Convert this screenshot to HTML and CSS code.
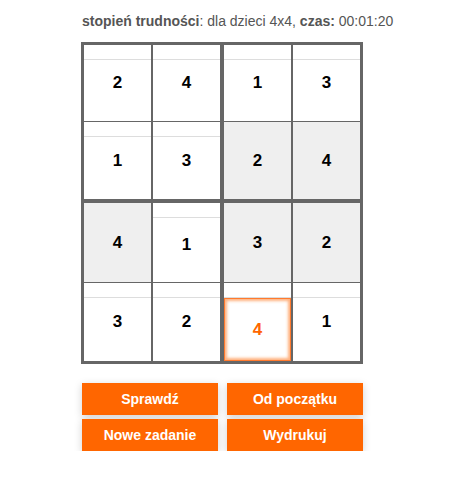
FILE: index.html
```html
<!DOCTYPE html>
<html lang="pl">
<head>
<meta charset="utf-8">
<link rel="stylesheet" href="styles.css">
</head>
<body>
<div class="page">
  <p class="info"><b>stopień trudności</b>: dla dzieci 4x4, <b>czas:</b> 00:01:20</p>
  <div class="board">
    <div class="box top">
      <div class="cell"><span>2</span></div>
      <div class="cell"><span>4</span></div>
      <div class="cell"><span>1</span></div>
      <div class="cell"><span>3</span></div>
    </div>
    <div class="box top">
      <div class="cell"><span>1</span></div>
      <div class="cell"><span>3</span></div>
      <div class="cell given"><span>2</span></div>
      <div class="cell given"><span>4</span></div>
    </div>
    <div class="box bottom">
      <div class="cell given"><span>4</span></div>
      <div class="cell low"><span>1</span></div>
      <div class="cell"><span>3</span></div>
      <div class="cell"><span>2</span></div>
    </div>
    <div class="box bottom">
      <div class="cell given"><span>3</span></div>
      <div class="cell given"><span>2</span></div>
      <div class="cell sel"><div class="focus">4</div></div>
      <div class="cell"><span>1</span></div>
    </div>
  </div>
  <div class="buttons">
    <button class="btn">Sprawdź</button>
    <button class="btn">Od początku</button>
    <button class="btn">Nowe zadanie</button>
    <button class="btn">Wydrukuj</button>
  </div>
</div>
</body>
</html>
```
FILE: styles.css
```css
html, body {
  margin: 0;
  padding: 0;
  background: #fff;
}
body {
  font-family: "Liberation Sans", Arial, sans-serif;
}
.page {
  padding: 13px 0 0 81px;
  width: 282px;
}
.info {
  margin: 0 0 13px 1px;
  font-size: 14px;
  line-height: 16px;
  color: #555;
  white-space: nowrap;
}
.info b {
  font-weight: bold;
}
.board {
  display: grid;
  grid-template-columns: 136px 136px;
  gap: 4px;
  border: 3px solid #666;
  background: #666;
  width: 276px;
}
.box {
  display: grid;
  grid-template-columns: 67px 67px;
  column-gap: 2px;
  row-gap: 1px;
  background: #666;
}
.box.top {
  grid-template-rows: 76px 77px;
}
.box.bottom {
  grid-template-rows: 79px 78px;
}
.cell {
  position: relative;
  background: #fff;
  display: flex;
  align-items: center;
  justify-content: center;
  font-size: 17px;
  font-weight: bold;
  color: #000;
}
.cell::before {
  content: "";
  position: absolute;
  left: 0;
  right: 0;
  top: 14px;
  height: 1px;
  background: #ddd;
}
.cell.given {
  background: #efefef;
}
.cell.given::before {
  display: none;
}
.cell.low span {
  margin-top: 4px;
}
.cell.sel .focus {
  position: absolute;
  left: 0;
  right: 0;
  top: 15px;
  bottom: 0;
  display: flex;
  align-items: center;
  justify-content: center;
  color: #ff6600;
  border: 1px solid #ff7a2e;
  box-shadow: inset 0 0 3px 2px #ffb27f;
}
.buttons {
  display: grid;
  grid-template-columns: 136px 136px;
  column-gap: 9px;
  row-gap: 4px;
  margin: 19px 0 0 1px;
}
.btn {
  height: 32px;
  border: 0;
  padding: 0;
  margin: 0;
  background: #ff6600;
  color: #fff;
  font-family: "Liberation Sans", Arial, sans-serif;
  font-size: 14px;
  font-weight: bold;
  box-shadow: 0 2px 8px rgba(0, 0, 0, 0.18);
}
```
